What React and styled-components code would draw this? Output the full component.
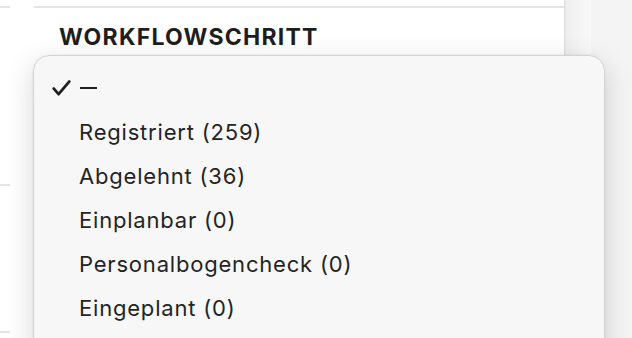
import React from "react";
import styled, { createGlobalStyle } from "styled-components";

const Global = createGlobalStyle`
  html, body { margin: 0; padding: 0; background: #ffffff; overflow: hidden; }
  body { font-family: Inter, "Noto Sans", sans-serif; color: #232323; }
  #root { width: 632px; height: 338px; }
`;

const Page = styled.div`
  position: relative;
  display: flex;
  width: 632px;
  height: 338px;
  overflow: hidden;
  background: #ffffff;
`;

const LeftStrip = styled.div`
  width: 10px;
  flex: none;
  display: flex;
  flex-direction: column;
`;

const StripRow = styled.div`
  height: ${(p) => p.$h}px;
  flex: none;
  border-bottom: 2px solid #e4e4e4;
`;

const Content = styled.div`
  flex: none;
  width: 530px;
  margin-left: 24px;
  display: flex;
  flex-direction: column;
`;

const TopRule = styled.div`
  height: 6px;
  border-bottom: 2px solid #e4e4e4;
`;

const Heading = styled.h2`
  margin: 16px 0 0 25px;
  font-family: Inter, "Noto Sans", sans-serif;
  font-weight: 700;
  font-size: 23px;
  line-height: 27px;
  letter-spacing: 1.25px;
  color: #1e1e1e;
`;

const Shade = styled.div`
  flex: none;
  width: 26px;
  background: linear-gradient(to right, #e6e6e6 0px, #efefef 2px, #f4f4f4 14px, #f8f8f8 26px);
  border-left: 1px solid #dedede;
`;

const RightPane = styled.div`
  flex: 1;
  background: #f4f4f5;
`;

const Menu = styled.div`
  position: absolute;
  left: 33px;
  top: 55px;
  width: 572px;
  height: 320px;
  box-sizing: border-box;
  padding-top: 10px;
  background: rgba(247, 247, 247, 0.97);
  border: 1px solid #d3d3d3;
  border-radius: 16px;
  box-shadow: 0 8px 28px rgba(0, 0, 0, 0.16), 0 0 2px rgba(0, 0, 0, 0.08);
  display: flex;
  flex-direction: column;
`;

const Item = styled.div`
  height: 44px;
  display: flex;
  align-items: center;
  padding-left: ${(p) => (p.$checked ? 18 : 45)}px;
  font-family: Inter, "Noto Sans", sans-serif;
  font-size: 22px;
  font-weight: 400;
  color: #242424;
  letter-spacing: 0.8px;
`;

const CheckSlot = styled.span`
  width: 27px;
  flex: none;
  display: flex;
  align-items: center;
`;

const Dash = styled.span`
  display: inline-block;
  width: 17px;
  height: 2px;
  background: #1f1f1f;
  margin-left: 1px;
`;

const items = [
  "Registriert (259)",
  "Abgelehnt (36)",
  "Einplanbar (0)",
  "Personalbogencheck (0)",
  "Eingeplant (0)",
];

export default function App() {
  return (
    <Page>
      <Global />
      <LeftStrip>
        <StripRow $h={6} />
        <StripRow $h={176} />
        <StripRow $h={145} />
      </LeftStrip>
      <Content>
        <TopRule />
        <Heading>WORKFLOWSCHRITT</Heading>
      </Content>
      <Shade />
      <RightPane />
      <Menu role="listbox">
        <Item role="option" aria-selected="true" $checked>
          <CheckSlot>
            <svg width="19" height="16" viewBox="0 0 19 16" aria-hidden="true">
              <path
                d="M1.8 8.6 L6.6 14.2 L17.2 1.6"
                fill="none"
                stroke="#1f1f1f"
                strokeWidth="2.8"
                strokeLinecap="round"
                strokeLinejoin="round"
              />
            </svg>
          </CheckSlot>
          <Dash aria-label="—" />
        </Item>
        {items.map((t) => (
          <Item key={t} role="option">
            {t}
          </Item>
        ))}
      </Menu>
    </Page>
  );
}
